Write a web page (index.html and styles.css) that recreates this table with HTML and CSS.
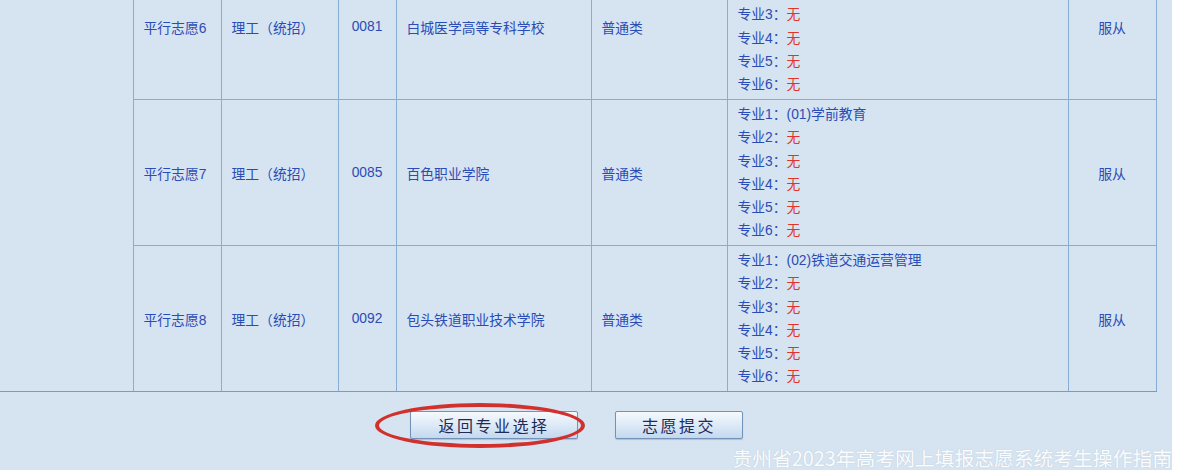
FILE: index.html
```html
<!DOCTYPE html>
<html lang="zh-CN">
<head>
<meta charset="utf-8">
<title>志愿确认</title>
<link rel="stylesheet" href="styles.css">
</head>
<body>
<div class="page">
  <table class="grid">
    <colgroup>
      <col class="c0"><col class="c1"><col class="c2"><col class="c3"><col class="c4"><col class="c5"><col class="c6"><col class="c7">
    </colgroup>
    <tr>
      <td class="blank" rowspan="3"></td>
      <td>平行志愿6</td>
      <td>理工（统招）</td>
      <td class="center">0081</td>
      <td>白城医学高等专科学校</td>
      <td>普通类</td>
      <td class="majors">
        <div>专业1：(01)护理</div>
        <div>专业2：<span class="none">无</span></div>
        <div>专业3：<span class="none">无</span></div>
        <div>专业4：<span class="none">无</span></div>
        <div>专业5：<span class="none">无</span></div>
        <div>专业6：<span class="none">无</span></div>
      </td>
      <td class="center">服从</td>
    </tr>
    <tr>
      <td>平行志愿7</td>
      <td>理工（统招）</td>
      <td class="center">0085</td>
      <td>百色职业学院</td>
      <td>普通类</td>
      <td class="majors">
        <div>专业1：(01)学前教育</div>
        <div>专业2：<span class="none">无</span></div>
        <div>专业3：<span class="none">无</span></div>
        <div>专业4：<span class="none">无</span></div>
        <div>专业5：<span class="none">无</span></div>
        <div>专业6：<span class="none">无</span></div>
      </td>
      <td class="center">服从</td>
    </tr>
    <tr>
      <td>平行志愿8</td>
      <td>理工（统招）</td>
      <td class="center">0092</td>
      <td>包头铁道职业技术学院</td>
      <td>普通类</td>
      <td class="majors">
        <div>专业1：(02)铁道交通运营管理</div>
        <div>专业2：<span class="none">无</span></div>
        <div>专业3：<span class="none">无</span></div>
        <div>专业4：<span class="none">无</span></div>
        <div>专业5：<span class="none">无</span></div>
        <div>专业6：<span class="none">无</span></div>
      </td>
      <td class="center">服从</td>
    </tr>
  </table>
  <div class="actions">
    <button class="btn btn-back" type="button">返回专业选择</button>
    <button class="btn btn-submit" type="button">志愿提交</button>
  </div>
  <div class="circle"></div>
  <div class="watermark">贵州省2023年高考网上填报志愿系统考生操作指南</div>
</div>
</body>
</html>
```

FILE: styles.css
```css
html, body {
  margin: 0;
  padding: 0;
  background: #ffffff;
}
.page {
  position: relative;
  width: 1172px;
  height: 470px;
  overflow: hidden;
  background: #d6e3f0;
  font-family: "Liberation Sans", "Noto Sans CJK SC", sans-serif;
}
.grid {
  margin-top: -47px;
  width: 1156px;
  border-collapse: collapse;
  table-layout: fixed;
  font-size: 13.8px;
  color: #2a4cb6;
}
.c0 { width: 133px; }
.c1 { width: 88px; }
.c2 { width: 117px; }
.c3 { width: 58px; }
.c4 { width: 195px; }
.c5 { width: 136px; }
.c6 { width: 341px; }
.c7 { width: 88px; }
.grid td {
  border: 1px solid #86add3;
  padding: 0 10px;
  vertical-align: middle;
  white-space: nowrap;
}
.grid tr:last-child td {
  border-bottom-color: #8499b0;
}
.grid td.blank {
  border-left: none;
  border-bottom: 1px solid #8499b0;
}
.grid td.center {
  text-align: center;
  padding: 0;
}
.grid td.majors {
  padding: 3px 10px;
}
.majors div {
  line-height: 23.2px;
  height: 23.2px;
}
.none {
  color: #e2332b;
}
.actions {
  display: flex;
  align-items: center;
  gap: 37px;
  padding: 19px 0 0 410px;
}
.btn {
  height: 28px;
  border: 1px solid #7392b8;
  border-radius: 2px;
  background: linear-gradient(#f6f9fd, #dbe8f6 55%, #c3d8ef);
  color: #1d2b56;
  font-family: "Noto Sans CJK SC", sans-serif;
  font-size: 16px;
  letter-spacing: 2.5px;
  padding: 0;
  box-shadow: 0 1px 1px rgba(80, 110, 150, 0.3);
}
.btn-back { width: 168px; }
.btn-submit { width: 128px; }
.circle {
  position: absolute;
  left: 375px;
  top: 403px;
  width: 202px;
  height: 37px;
  border: 4px solid #d2302d;
  border-radius: 50%;
}
.watermark {
  position: absolute;
  right: 0;
  bottom: 0;
  color: #ffffff;
  font-family: "Noto Sans CJK SC", sans-serif;
  font-size: 19.8px;
  line-height: 24px;
  opacity: 0.92;
  text-shadow: 0 0 1px rgba(120, 140, 170, 0.4);
}
```
